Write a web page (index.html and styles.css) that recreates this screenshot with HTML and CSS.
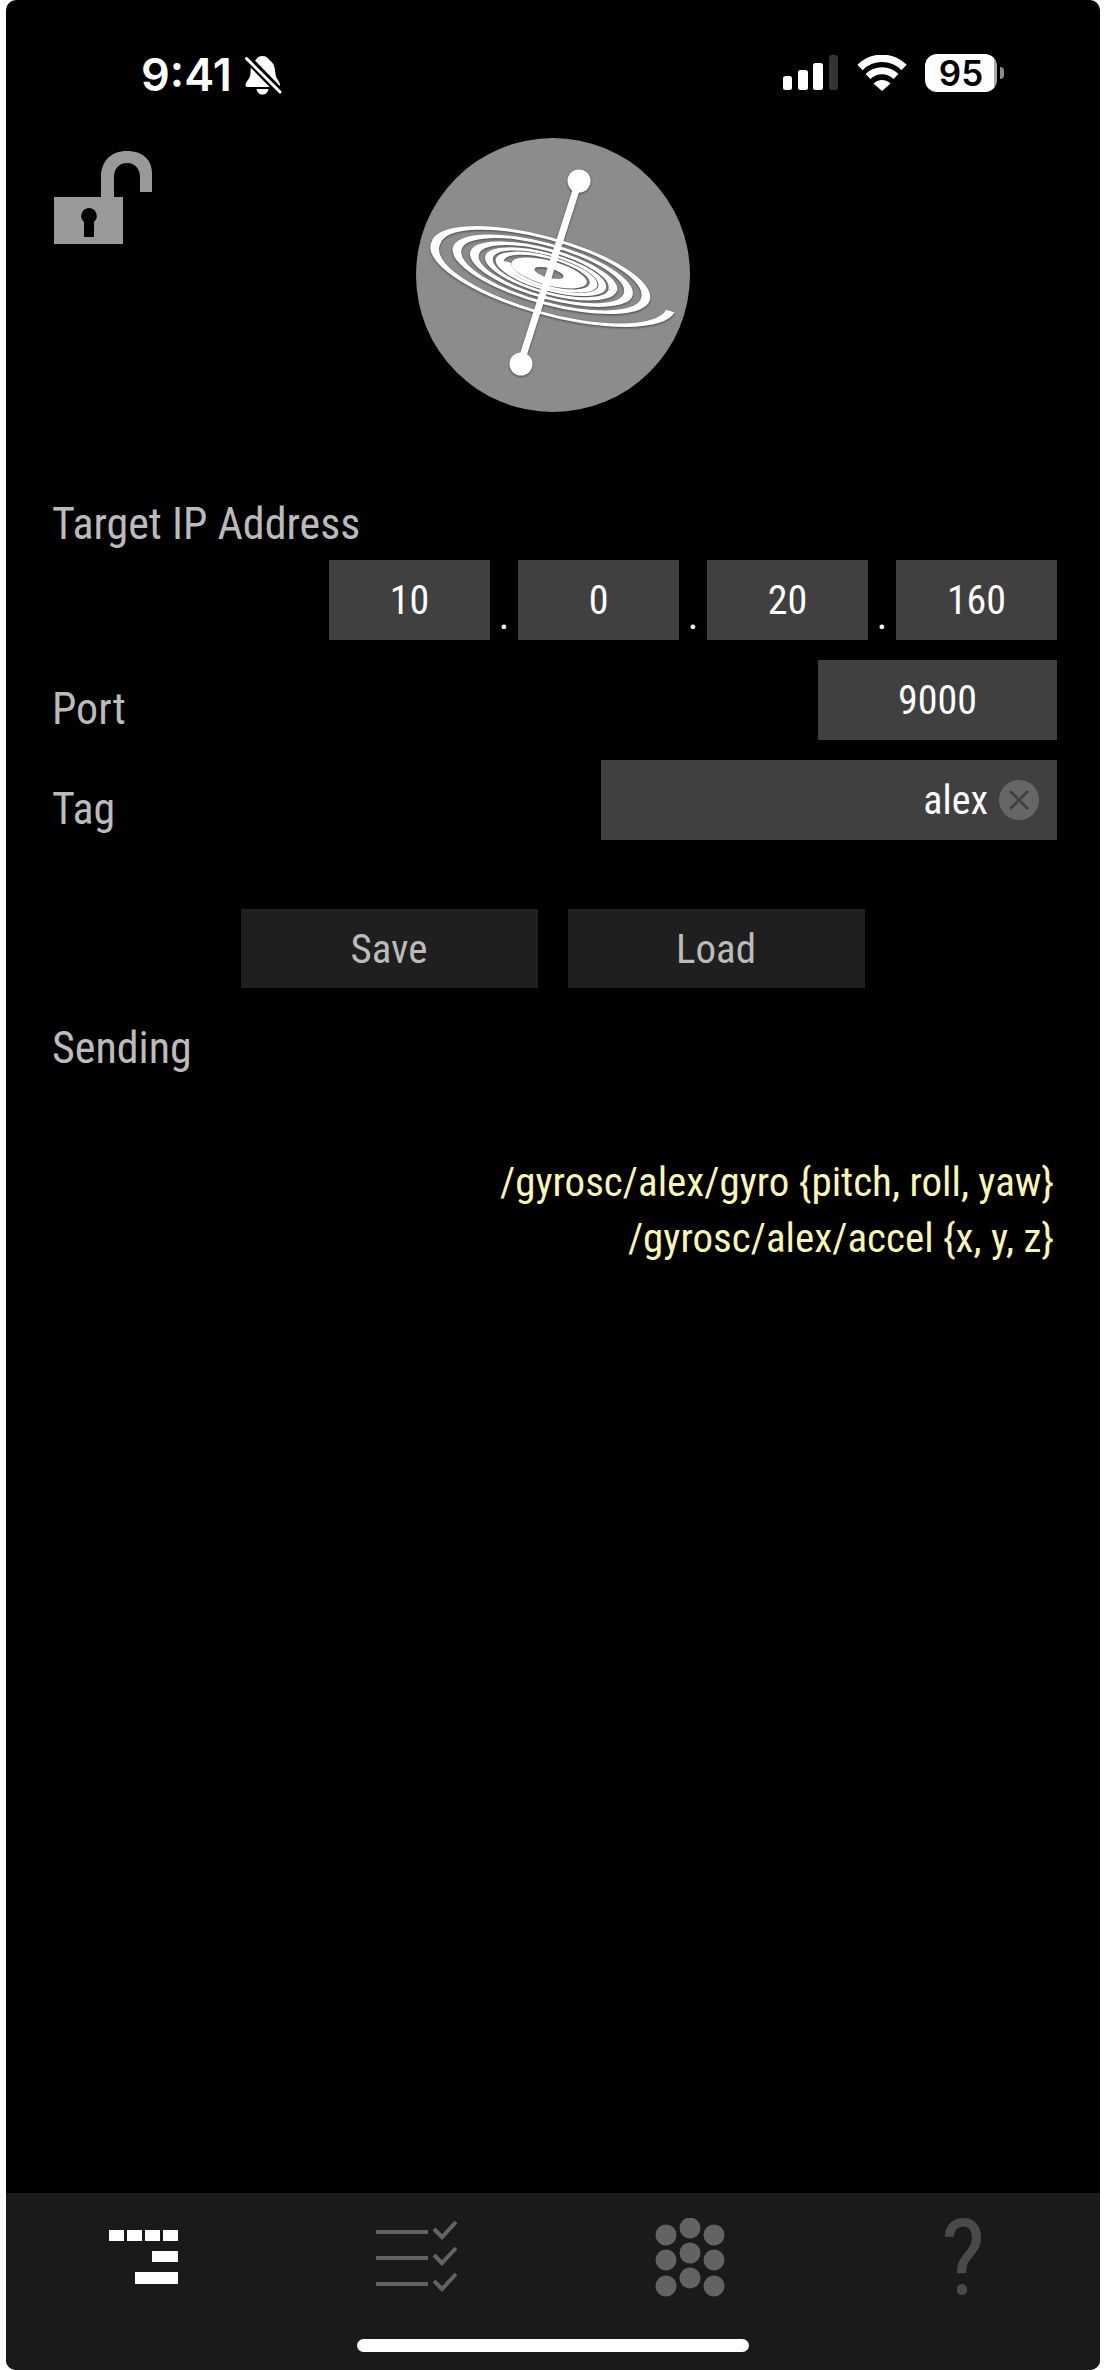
FILE: index.html
```html
<!DOCTYPE html>
<html lang="en">
<head>
<meta charset="utf-8">
<meta name="viewport" content="width=device-width, initial-scale=1">
<title>GyrOSC</title>
<link rel="stylesheet" href="styles.css">
</head>
<body>
<div class="screen">
  <div class="status">
    <div class="status-left">
      <span class="time">9:41</span>
      <svg class="bell" width="38" height="42" viewBox="0 0 38 42" aria-hidden="true">
        <path d="M11 6.500C13 5 13.500 2 18.500 2s6 3.500 8 5c4 3 4.500 8 5 13 .4 5 4.500 7.500 4.500 11 0 1.500-1 2-2 2H3.500c-1 0-2-.5-2-2 0-3.500 5-6 5-12 0-4 1-9.500 4.500-12.500zM12.500 35h12c-.5 3.500-3 5.500-6 5.500s-5.500-2-6-5.500z" fill="#fff"/>
        <path d="M0 1 39 41" stroke="#000" stroke-width="8"/>
        <path d="M2.500 4.500 36 38" stroke="#fff" stroke-width="3" stroke-linecap="round"/>
      </svg>
    </div>
    <div class="status-right">
      <svg width="56" height="36" viewBox="0 0 56 36" fill="#fff" aria-hidden="true">
        <rect x="0" y="21" width="9" height="14" rx="2.500"/>
        <rect x="15" y="15" width="10" height="20" rx="2.500"/>
        <rect x="30" y="8" width="10" height="27" rx="2.500"/>
        <rect x="46" y="0" width="9" height="35" rx="2.500" fill="#333"/>
      </svg>
      <svg width="50" height="36" viewBox="0 0 50 36" fill="none" stroke="#fff" aria-hidden="true">
        <path d="M3 12.500a31 31 0 0 1 44 0" stroke-width="7.500"/>
        <path d="M11 21.500a20 20 0 0 1 28 0" stroke-width="7"/>
        <path d="M16.500 28.500a12 12 0 0 1 17 0L25 36z" fill="#fff" stroke="none"/>
      </svg>
      <div class="battery"><span class="battery-level">95</span><span class="battery-tip"></span></div>
    </div>
  </div>

  <header class="header">
    <button class="lock" type="button" aria-label="Unlocked">
      <svg width="98" height="93" viewBox="0 0 98 93" aria-hidden="true">
        <path d="M0 46h47V26C47 10 57 0 73 0s25 9 25 22v19H86V26c0-8-5-14-13-14s-13 6-13 14v20h9v47H0z" fill="#999"/>
        <path d="M35 57a8 8 0 0 1 5 14v15H30V71a8 8 0 0 1 5-14z" fill="#000"/>
      </svg>
    </button>
    <svg class="logo" width="274" height="274" viewBox="-137 -137 274 274" role="img" aria-label="GyrOSC">
      <circle r="137" fill="#8c8c8c"/>
      <g class="logo-mark" fill="none" stroke="#fff">
        <g transform="translate(-4 -2) rotate(15) scale(1 .31)">
          <path d="M127 17A121 121 0 0 1-117 0A108 108 0 0 1 100 0A97 97 0 0 1-95 0A87 87 0 0 1 82 0A78 78 0 0 1-77 0A70 70 0 0 1 66 0" stroke-width="9"/>
          <path d="M66 0A63 63 0 0 1-62 0A58 58 0 0 1 55 0A52 52 0 0 1-51 0A47 47 0 0 1 46 0A43 43 0 0 1-43 0" stroke-width="8"/>
          <circle r="27" stroke-width="24"/>
        </g>
        <path d="M26-94-32 87" stroke-width="7"/>
        <circle cx="26" cy="-94" r="11.500" fill="#fff" stroke="none"/>
        <circle cx="-32" cy="89" r="11.500" fill="#fff" stroke="none"/>
      </g>
    </svg>
  </header>

  <main class="main">
    <form class="form">
      <fieldset class="ip">
        <legend class="label">Target IP Address</legend>
        <div class="octets">
          <input class="field octet" type="text" inputmode="numeric" value="10" aria-label="First octet">
          <span class="dot">.</span>
          <input class="field octet" type="text" inputmode="numeric" value="0" aria-label="Second octet">
          <span class="dot">.</span>
          <input class="field octet" type="text" inputmode="numeric" value="20" aria-label="Third octet">
          <span class="dot">.</span>
          <input class="field octet" type="text" inputmode="numeric" value="160" aria-label="Fourth octet">
        </div>
      </fieldset>
      <div class="row">
        <label class="label row-label" for="port">Port</label>
        <input class="field port" id="port" type="text" inputmode="numeric" value="9000">
      </div>
      <div class="row">
        <label class="label row-label" for="tag">Tag</label>
        <div class="field tag">
          <input class="tag-input" id="tag" type="text" value="alex">
          <button class="clear" type="button" aria-label="Clear tag">
            <svg width="40" height="40" viewBox="0 0 40 40" aria-hidden="true">
              <circle cx="20" cy="20" r="20" fill="#666"/>
              <path d="M12 12l16 16M28 12 12 28" stroke="#404040" stroke-width="3" stroke-linecap="round"/>
            </svg>
          </button>
        </div>
      </div>
      <div class="actions">
        <button class="action" type="button">Save</button>
        <button class="action" type="button">Load</button>
      </div>
    </form>
    <section class="sending">
      <h2 class="label">Sending</h2>
      <p class="message">/gyrosc/alex/gyro {pitch, roll, yaw}</p>
      <p class="message">/gyrosc/alex/accel {x, y, z}</p>
    </section>
  </main>

  <nav class="tabs">
    <a class="tab" href="#target" aria-label="Target">
      <svg width="70" height="80" viewBox="0 0 70 80" fill="#fff" aria-hidden="true">
        <path d="M1 12h15v11H1zM19 12h15v11H19zM37 12h15v11H37zM55 12h15v11H55zM44 33h26v11H44zM27 54h43v12H27z"/>
      </svg>
    </a>
    <a class="tab" href="#sensors" aria-label="Sensors">
      <svg width="82" height="80" viewBox="0 0 82 80" fill="none" stroke="#636363" stroke-width="4" aria-hidden="true">
        <path d="M1 14h52M1 40h52M1 66h52M59 11l8 8L81 4M59 37l8 8L81 30M59 63l8 8L81 56"/>
      </svg>
    </a>
    <a class="tab" href="#grid" aria-label="Grid">
      <svg width="70" height="80" viewBox="0 0 70 80" fill="#636363" aria-hidden="true">
        <circle cx="11" cy="17" r="10.500"/><circle cx="35" cy="10" r="10.500"/><circle cx="59" cy="17" r="10.500"/>
        <circle cx="11" cy="42" r="10.500"/><circle cx="35" cy="35" r="10.500"/><circle cx="59" cy="42" r="10.500"/>
        <circle cx="11" cy="68" r="10.500"/><circle cx="35" cy="60" r="10.500"/><circle cx="59" cy="68" r="10.500"/>
      </svg>
    </a>
    <a class="tab help" href="#help" aria-label="Help">?</a>
    <span class="home"></span>
  </nav>
</div>
</body>
</html>
```
FILE: styles.css
```css
* { box-sizing: border-box; }

body {
  margin: 0;
  padding: 0 6px;
  background: #fff;
  font-family: "Roboto Condensed", "Liberation Sans Narrow", "Liberation Sans", sans-serif;
}

button, input {
  font: inherit;
  color: inherit;
  border: 0;
  padding: 0;
  margin: 0;
  border-radius: 0;
  background: none;
}

svg { display: block; flex: none; }

.screen {
  display: flex;
  flex-direction: column;
  min-height: 100vh;
  background: #000;
  color: #fff;
  border-radius: 10px;
  overflow: hidden;
}

.status {
  display: flex;
  justify-content: space-between;
  align-items: flex-start;
  height: 138px;
  padding: 54px 96px 0 135px;
  font-family: Inter, "Liberation Sans", sans-serif;
}

.status-left { display: flex; align-items: center; gap: 12px; height: 42px; }
.status-right { display: flex; align-items: center; gap: 18px; height: 38px; }

.time { font-size: 45px; line-height: 42px; font-weight: 600; }

.battery { display: flex; align-items: center; gap: 3px; }

.battery-level {
  width: 72px;
  height: 38px;
  border-radius: 12px;
  background: linear-gradient(90deg, #fff 69px, #aaa 69px);
  color: #000;
  font-size: 35px;
  line-height: 38px;
  font-weight: 600;
  text-align: center;
}

.battery-tip {
  width: 4px;
  height: 12px;
  border-radius: 0 4px 4px 0;
  background: #8c8c8c;
}

.header {
  display: grid;
  grid-template-columns: 1fr auto 1fr;
  align-items: start;
  padding: 0 48px;
}

.lock { justify-self: start; margin-top: 13px; cursor: pointer; }
.logo-mark { filter: drop-shadow(0 1px 1px rgba(0, 0, 0, .5)); }

.main { flex: 1; padding: 84px 43px 0 46px; }

.form { display: flex; flex-direction: column; gap: 20px; }

.label {
  margin: 0;
  padding: 0;
  color: #bbb;
  font-size: 44px;
  line-height: 56px;
  font-weight: 400;
}

.ip { border: 0; margin: 0; padding: 0; min-width: 0; }

.octets {
  display: flex;
  justify-content: flex-end;
  margin-top: 8px;
}

.field {
  height: 80px;
  background: #404040;
  color: #fff;
  font-size: 40px;
  text-align: center;
}

.octet { width: 161px; min-width: 0; }

.dot {
  width: 28px;
  align-self: flex-end;
  text-align: center;
  font-size: 40px;
  line-height: 48px;
}

.row { display: flex; justify-content: space-between; align-items: center; height: 80px; }
.row-label { padding-top: 18px; }
.port { width: 239px; }

.tag {
  display: flex;
  align-items: center;
  gap: 11px;
  width: 456px;
  padding: 0 18px;
}

.tag-input { flex: 1; min-width: 0; height: 80px; text-align: right; }
.clear { cursor: pointer; }

.actions {
  display: flex;
  justify-content: center;
  gap: 30px;
  margin-top: 49px;
  padding-right: 4px;
}

.action {
  width: 297px;
  height: 79px;
  background: #1f1f1f;
  color: #bbb;
  font-size: 41px;
  cursor: pointer;
}

.sending { padding-top: 32px; }
.sending .label { margin-bottom: 78px; }

.message {
  margin: 0;
  padding-right: 3px;
  color: #f9f6b4;
  font-size: 41px;
  line-height: 56px;
  text-align: right;
}

.tabs {
  position: relative;
  display: grid;
  grid-template-columns: repeat(4, 1fr);
  height: 177px;
  padding-top: 25px;
  background: #1a1a1a;
}

.tab { display: flex; justify-content: center; height: 80px; text-decoration: none; }

.help { color: #4a4a4a; font-size: 106px; line-height: 80px; }

.home {
  position: absolute;
  left: 50%;
  bottom: 18px;
  width: 392px;
  height: 13px;
  margin-left: -196px;
  border-radius: 7px;
  background: #fff;
}
```
